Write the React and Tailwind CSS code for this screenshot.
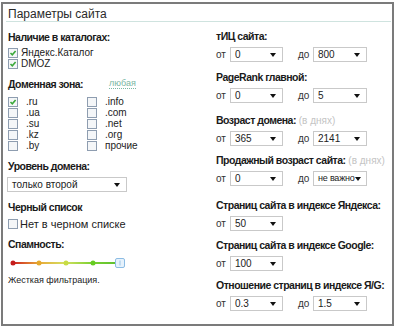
import React from "react";

function Box({ checked }) {
  return (
    <span className="relative inline-block w-[10px] h-[10px] shrink-0 border border-[#8e9db0] bg-[#f4f6f8]">
      {checked && (
        <svg className="absolute left-0 top-0" width="8" height="8" viewBox="0 0 8 8">
          <path d="M1.5 4 L3.3 5.8 L6.6 2" fill="none" stroke="#3aa83a" strokeWidth="1.6" />
        </svg>
      )}
    </span>
  );
}

function Select({ value, className, small }) {
  return (
    <div
      className={`flex items-center justify-between h-[15px] border border-[#c9c9c9] bg-white pl-[4px] pr-[6px] leading-none text-[#222] whitespace-nowrap shrink-0 ${className}`}
    >
      <span className={small ? "text-[9px] tracking-[-0.2px]" : "text-[10px]"}>{value}</span>
      <svg width="6" height="4" viewBox="0 0 6 4" className="shrink-0">
        <polygon points="0,0 6,0 3,4" fill="#111" />
      </svg>
    </div>
  );
}

function Label({ children, sub, className = "" }) {
  return (
    <div className={`h-[14px] leading-[14px] text-[10.5px] font-bold tracking-[-0.5px] text-[#1a1a1a] whitespace-nowrap ${className}`}>
      {children}
      {sub && <span className="font-normal text-[10px] tracking-normal text-[#c4c4c4]"> {sub}</span>}
    </div>
  );
}

function Range({ from, to, small }) {
  return (
    <div className="flex items-center h-[15px] text-[10px] text-[#333] mt-[4px]">
      <span className="w-[14px]">от</span>
      <Select value={from} className="w-[53px]" />
      {to !== undefined && (
        <>
          <span className="ml-[15px] w-[15px]">до</span>
          <Select value={to} className="w-[54px]" small={small} />
        </>
      )}
    </div>
  );
}

function CheckRow({ checked, label }) {
  return (
    <div className="flex items-center h-[11px] gap-[3px] text-[10px] text-[#222]">
      <Box checked={checked} />
      <span>{label}</span>
    </div>
  );
}

function Zone({ label, checked }) {
  return (
    <div className="flex items-center h-[11px] text-[10px] text-[#222]">
      <Box checked={checked} />
      <span className="ml-[8px]">{label}</span>
    </div>
  );
}

function Slider() {
  return (
    <svg width="125" height="12" viewBox="0 0 125 12" className="block">
      <defs>
        <linearGradient id="sp" x1="0" x2="1" y1="0" y2="0">
          <stop offset="0" stopColor="#cc2020" />
          <stop offset="0.25" stopColor="#e8a838" />
          <stop offset="0.5" stopColor="#d4e060" />
          <stop offset="0.78" stopColor="#78d030" />
          <stop offset="1" stopColor="#60c030" />
        </linearGradient>
      </defs>
      <rect x="5" y="5" width="103" height="2" fill="url(#sp)" />
      <circle cx="5" cy="6" r="2.5" fill="#c41c1c" />
      <circle cx="31" cy="6" r="2.5" fill="#e4a82c" />
      <circle cx="58" cy="6" r="2.5" fill="#c8dc44" />
      <circle cx="85" cy="6" r="2.5" fill="#66cc22" />
      <rect x="107.5" y="1.5" width="9" height="9" rx="1.5" fill="#e6f2fc" stroke="#8cbce4" />
      <line x1="112" y1="3.5" x2="112" y2="8.5" stroke="#9cc4e4" />
    </svg>
  );
}

export default function App() {
  return (
    <div className="w-[400px] h-[330px] bg-white overflow-hidden font-['Liberation_Sans',Arial,sans-serif]">
      <div className="ml-[1px] mt-[2px] w-[393px] h-[324px] border-2 border-[#7b7b7b] bg-white">
        <div className="pl-[5px] mt-[3px] h-[14px] leading-[14px] text-[12px] text-[#2a2a2a]">
          Параметры сайта
        </div>
        <div className="ml-[3px] mr-[1px] h-px bg-[#cfe3df]" />
        <div className="flex">
          <div className="w-[213px] shrink-0 pl-[5px] flex flex-col">
            <Label className="mt-[8px]">Наличие в каталогах:</Label>
            <div className="mt-[3px]">
              <CheckRow checked label="Яндекс.Каталог" />
              <CheckRow checked label="DMOZ" />
            </div>
            <div className="mt-[8px] flex items-center h-[14px]">
              <Label>Доменная зона:</Label>
              <span className="ml-[26px] text-[9px] leading-none text-[#7ab8a4] border-b border-dotted border-[#7ab8a4]">
                любая
              </span>
            </div>
            <div className="mt-[5px] grid grid-cols-[79px_1fr]">
              <Zone label=".ru" checked />
              <Zone label=".info" />
              <Zone label=".ua" />
              <Zone label=".com" />
              <Zone label=".su" />
              <Zone label=".net" />
              <Zone label=".kz" />
              <Zone label=".org" />
              <Zone label=".by" />
              <Zone label="прочие" />
            </div>
            <Label className="mt-[8px]">Уровень домена:</Label>
            <Select value="только второй" className="mt-[4px] -ml-[1px] w-[120px]" />
            <Label className="mt-[8px]">Черный список</Label>
            <div className="mt-[4px] flex items-center h-[12px] gap-[2px] text-[11px] text-[#222]">
              <Box />
              <span>Нет в черном списке</span>
            </div>
            <Label className="mt-[7px]">Спамность:</Label>
            <div className="mt-[6px] h-[12px]">
              <Slider />
            </div>
            <div className="mt-[5px] h-[12px] leading-[12px] text-[9px] text-[#222]">Жесткая фильтрация.</div>
          </div>
          <div className="flex flex-col">
            <Label className="mt-[7px]">тИЦ сайта:</Label>
            <Range from="0" to="800" />
            <Label className="mt-[8px]">PageRank главной:</Label>
            <Range from="0" to="5" />
            <Label className="mt-[10px]" sub="(в днях)">Возраст домена:</Label>
            <Range from="365" to="2141" />
            <Label className="mt-[7px]" sub="(в днях)">Продажный возраст сайта:</Label>
            <Range from="0" to="не важно" small />
            <Label className="mt-[12px]">Страниц сайта в индексе Яндекса:</Label>
            <Range from="50" />
            <Label className="mt-[7px]">Страниц сайта в индексе Google:</Label>
            <Range from="100" />
            <Label className="mt-[7px]">Отношение страниц в индексе Я/G:</Label>
            <Range from="0.3" to="1.5" />
          </div>
        </div>
      </div>
    </div>
  );
}
